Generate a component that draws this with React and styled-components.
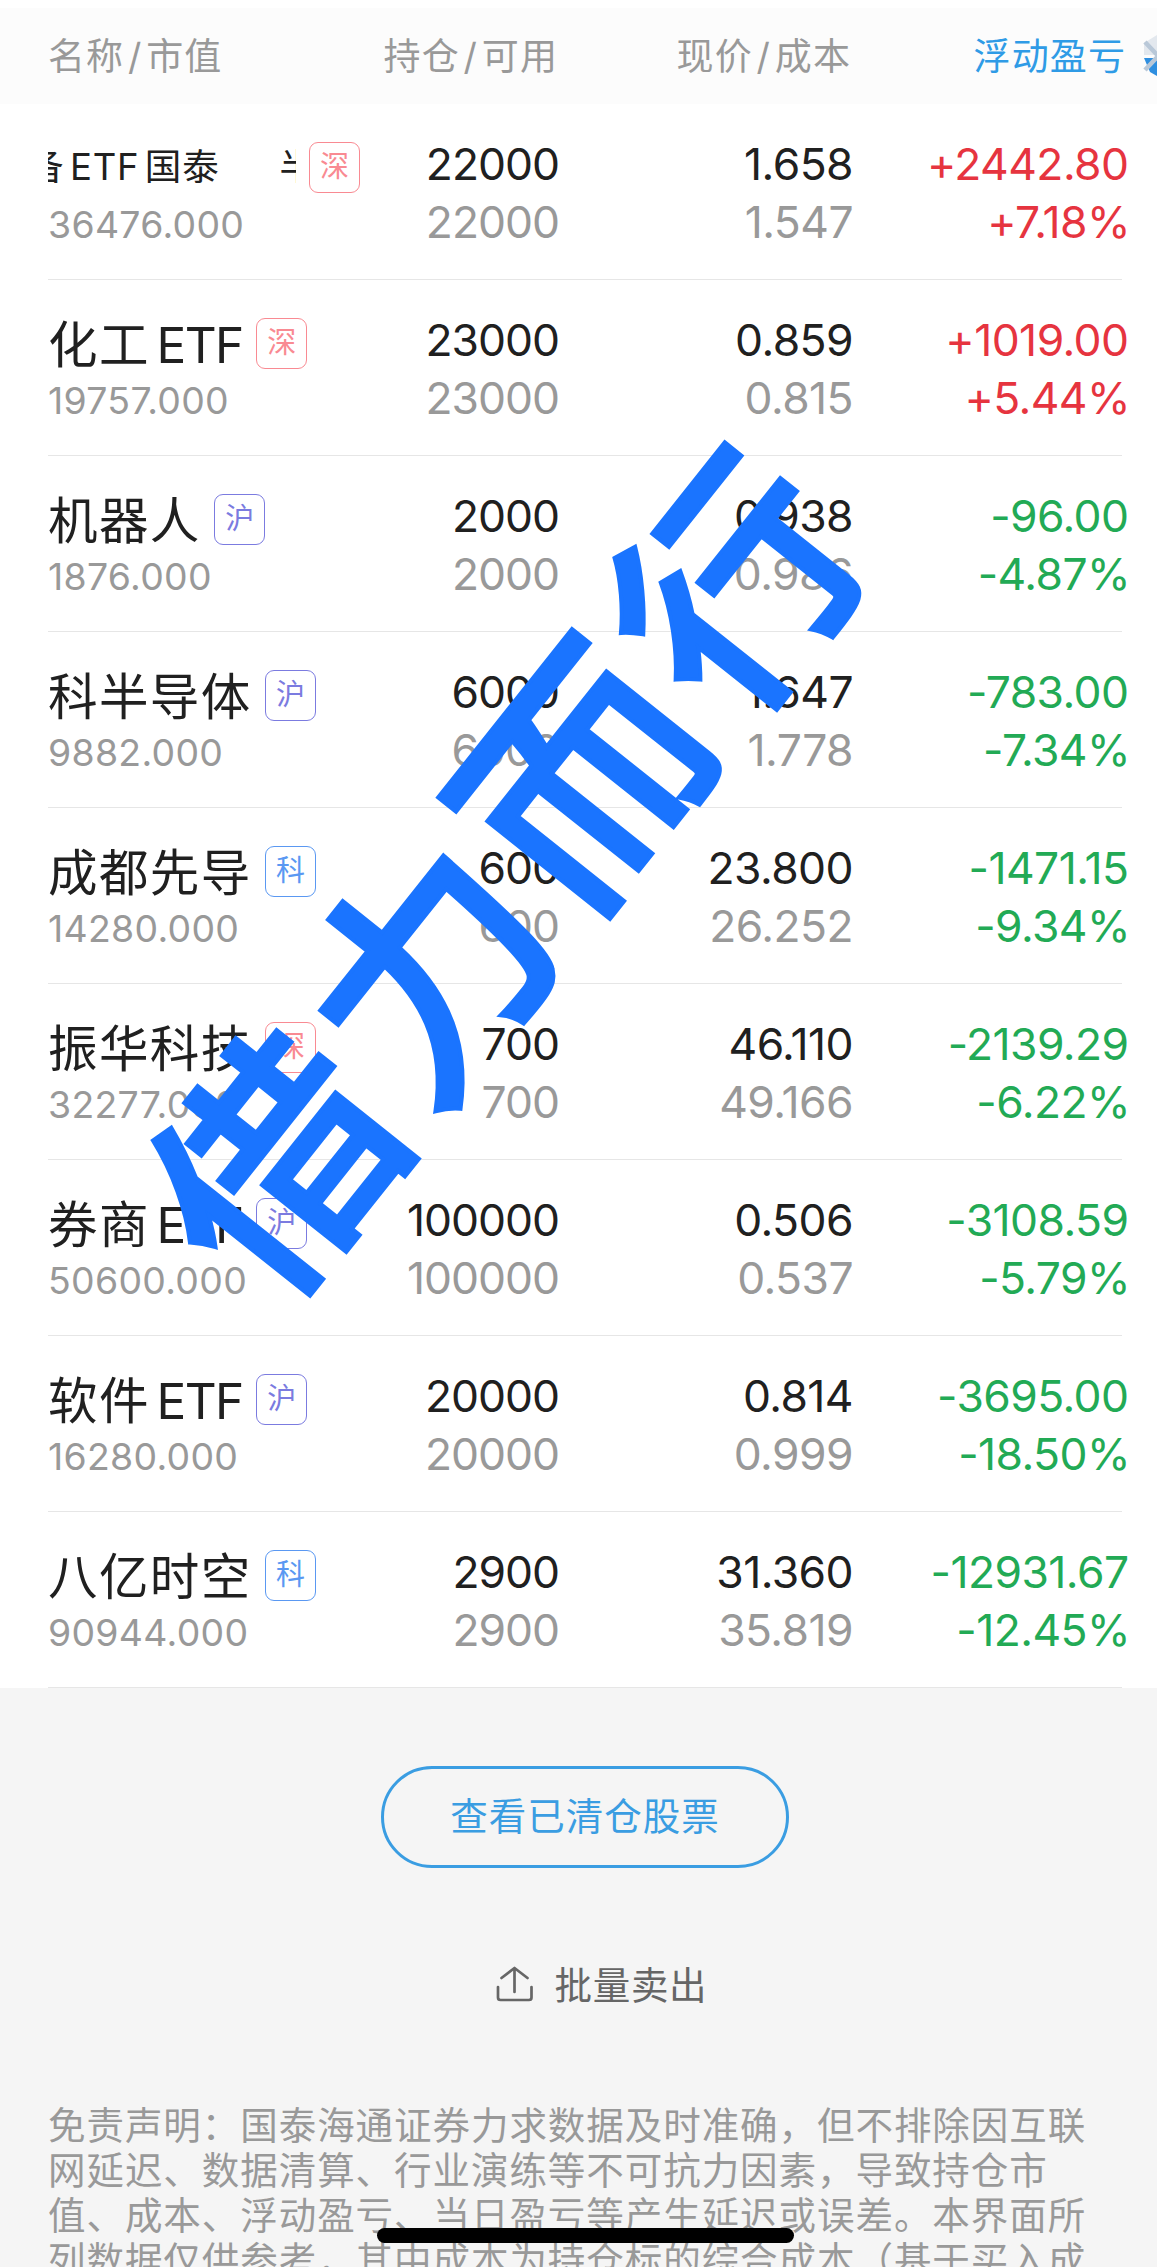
import React from "react";
import styled, { createGlobalStyle } from "styled-components";

const GlobalStyle = createGlobalStyle`
  * { box-sizing: border-box; }
  html, body { margin: 0; padding: 0; }
  body {
    width: 1157px;
    height: 2267px;
    overflow: hidden;
    background: #f5f5f5;
    font-family: Inter, "Noto Sans CJK SC", sans-serif;
    font-weight: 400;
    font-feature-settings: "calt" 0;
  }
`;

const COLORS = { up: "#e6343f", down: "#22aa55", 深: "#f98a92", 沪: "#7b7be0", 科: "#5a98f2" };

const Page = styled.div`
  position: relative;
  width: 1157px;
  height: 2267px;
  overflow: hidden;
`;

const Panel = styled.section`
  background: #fff;
  padding-top: 8px;
`;

const HeaderRow = styled.header`
  display: grid;
  grid-template-columns: 310px 200px 293px 275px 30px;
  align-items: center;
  height: 96px;
  padding: 2px 0 0 48px;
  background: #fcfcfc;
  color: #999;
  font-size: 37px;
  letter-spacing: 1.1px;
  line-height: 54px;
`;

const HeaderCell = styled.div`
  text-align: ${(p) => (p.$left ? "left" : "right")};
  color: ${(p) => (p.$active ? "#2f9be6" : "inherit")};
  white-space: nowrap;
`;

const Slash = styled.span`
  display: inline-block;
  width: 22px;
  text-align: center;
`;

const SettingsIcon = styled.svg`
  display: block;
  margin: -2px 0 0 11px;
`;

const Row = styled.article`
  display: grid;
  grid-template-columns: 312px 199px 294px 275.5px;
  height: 176px;
  padding-left: 48px;
  background: linear-gradient(#e6e6e6, #e6e6e6) 48px 175px / 1074px 1px no-repeat;
`;

const NameCell = styled.div`
  padding-top: 27px;
`;

const NameLine = styled.div`
  display: flex;
  align-items: center;
  height: 72px;
  color: #202020;
  white-space: nowrap;
`;

const Name = styled.span`
  padding-top: 3px;
  font-size: 49.5px;
  letter-spacing: 1.4px;
  line-height: 72px;
`;

const Latin = styled.span`
  display: inline-block;
  width: ${(p) => (p.$inner ? "2.2em" : "1.88em")};
  text-align: ${(p) => (p.$inner ? "center" : "right")};
  letter-spacing: ${(p) => (p.$inner ? "0.02em" : "-0.03em")};
`;

const Marquee = styled.div`
  display: flex;
  gap: 60px;
  width: 248px;
  overflow: hidden;
  font-size: 36.5px;
  letter-spacing: 0.9px;
  line-height: 60px;
`;

const MarqueeText = styled.span`
  flex: none;

  &:first-child {
    margin-left: -170.5px;
  }
`;

const Tag = styled.span`
  display: flex;
  flex: none;
  align-items: center;
  justify-content: center;
  width: 51px;
  height: 51px;
  margin-left: 13.5px;
  border: 1.5px solid ${(p) => COLORS[p.$kind]};
  border-radius: 9px;
  color: ${(p) => COLORS[p.$kind]};
  font-size: 29px;
  line-height: 48px;
`;

const MarketValue = styled.div`
  color: #999;
  font-size: 37.4px;
  line-height: 44px;
  letter-spacing: 0.3px;
`;

const NumberCell = styled.div`
  padding-top: 30.5px;
  color: ${(p) => p.$color || "#202020"};
  font-size: 44.4px;
  line-height: 58px;
  letter-spacing: ${(p) => p.$spacing || "-0.55px"};
  text-align: right;
  white-space: nowrap;
`;

const SubNumber = styled.div`
  margin-right: ${(p) => (p.$inherit ? "-1.5px" : "0")};
  color: ${(p) => (p.$inherit ? "inherit" : "#999")};
`;

const Footer = styled.footer`
  display: flex;
  flex-direction: column;
  padding-top: 78px;
`;

const ClearedButton = styled.button`
  width: 408px;
  height: 102px;
  margin-left: 381px;
  padding: 0;
  border: 3px solid #3a9de2;
  border-radius: 51px;
  background: transparent;
  color: #3a9de2;
  font: inherit;
  font-size: 37.5px;
  letter-spacing: 1px;
  line-height: 92px;
`;

const BatchSell = styled.div`
  display: flex;
  align-items: center;
  gap: 21px;
  height: 60px;
  margin: 84px 0 0 494.5px;
  color: #666;
  font-size: 37.5px;
  letter-spacing: 0.7px;

  svg {
    position: relative;
    top: 2px;
  }
`;

const Disclaimer = styled.p`
  margin: 91px 0 0 48px;
  color: #999;
  font-size: 37.5px;
  letter-spacing: 0.95px;
  line-height: 45px;
  white-space: nowrap;
`;

const Line = styled.span`
  display: block;
`;

const HomeBar = styled.div`
  position: absolute;
  left: 377px;
  top: 2228px;
  width: 417px;
  height: 15px;
  border-radius: 8px;
  background: #000;
`;

const Watermark = styled.div`
  position: absolute;
  left: 499px;
  top: 861px;
  transform: translate(-50%, -50%) rotate(-51.5deg);
  color: #1a74ff;
  font-family: "Noto Sans CJK SC", sans-serif;
  font-size: 238px;
  font-weight: 500;
  letter-spacing: 9px;
  line-height: 1;
  white-space: nowrap;
  -webkit-text-stroke: 4px #1a74ff;
  pointer-events: none;
`;

const HOLDINGS = [
  { name: "半导体设备", latin: "ETF", tail: "国泰", scroll: true, tag: "深", value: "36476.000", qty: "22000", price: "1.658", cost: "1.547", pnl: "+2442.80", pct: "+7.18%" },
  { name: "化工", latin: "ETF", tag: "深", value: "19757.000", qty: "23000", price: "0.859", cost: "0.815", pnl: "+1019.00", pct: "+5.44%" },
  { name: "机器人", tag: "沪", value: "1876.000", qty: "2000", price: "0.938", cost: "0.986", pnl: "-96.00", pct: "-4.87%" },
  { name: "科半导体", tag: "沪", value: "9882.000", qty: "6000", price: "1.647", cost: "1.778", pnl: "-783.00", pct: "-7.34%" },
  { name: "成都先导", tag: "科", value: "14280.000", qty: "600", price: "23.800", cost: "26.252", pnl: "-1471.15", pct: "-9.34%" },
  { name: "振华科技", tag: "深", value: "32277.000", qty: "700", price: "46.110", cost: "49.166", pnl: "-2139.29", pct: "-6.22%" },
  { name: "券商", latin: "ETF", tag: "沪", value: "50600.000", qty: "100000", price: "0.506", cost: "0.537", pnl: "-3108.59", pct: "-5.79%" },
  { name: "软件", latin: "ETF", tag: "沪", value: "16280.000", qty: "20000", price: "0.814", cost: "0.999", pnl: "-3695.00", pct: "-18.50%" },
  { name: "八亿时空", tag: "科", value: "90944.000", qty: "2900", price: "31.360", cost: "35.819", pnl: "-12931.67", pct: "-12.45%" },
];

const DISCLAIMER = [
  "免责声明：国泰海通证券力求数据及时准确，但不排除因互联",
  "网延迟、数据清算、行业演练等不可抗力因素，导致持仓市",
  "值、成本、浮动盈亏、当日盈亏等产生延迟或误差。本界面所",
  "列数据仅供参考，其中成本为持仓标的综合成本（基于买入成",
];

function Label({ item }) {
  return (
    <>
      {item.name}
      {item.latin && <Latin $inner={Boolean(item.tail)}>{item.latin}</Latin>}
      {item.tail}
    </>
  );
}

function Holding({ item }) {
  return (
    <Row>
      <NameCell>
        <NameLine>
          {item.scroll ? (
            <Marquee>
              <MarqueeText><Label item={item} /></MarqueeText>
              <MarqueeText><Label item={item} /></MarqueeText>
            </Marquee>
          ) : (
            <Name><Label item={item} /></Name>
          )}
          <Tag $kind={item.tag}>{item.tag}</Tag>
        </NameLine>
        <MarketValue>{item.value}</MarketValue>
      </NameCell>
      <NumberCell $spacing="-1px">
        {item.qty}
        <SubNumber>{item.qty}</SubNumber>
      </NumberCell>
      <NumberCell>
        {item.price}
        <SubNumber>{item.cost}</SubNumber>
      </NumberCell>
      <NumberCell $color={item.pnl[0] === "+" ? COLORS.up : COLORS.down}>
        {item.pnl}
        <SubNumber $inherit>{item.pct}</SubNumber>
      </NumberCell>
    </Row>
  );
}

export default function App() {
  return (
    <Page>
      <GlobalStyle />
      <Panel>
        <HeaderRow>
          <HeaderCell $left>名称<Slash>/</Slash>市值</HeaderCell>
          <HeaderCell>持仓<Slash>/</Slash>可用</HeaderCell>
          <HeaderCell>现价<Slash>/</Slash>成本</HeaderCell>
          <HeaderCell $active>浮动盈亏</HeaderCell>
          <SettingsIcon width="20" height="42" viewBox="0 0 20 42">
            <path d="M7 8 L20 0 V20 H7Z" fill="#e3e8ee" />
            <path d="M7 23 H20 V41 L13 37Z" fill="#2f8fe0" />
            <path d="M8 7 L26 26 M8 35 L26 16" stroke="#b9c8d8" strokeWidth="4.5" />
          </SettingsIcon>
        </HeaderRow>
        {HOLDINGS.map((item) => (
          <Holding key={item.name} item={item} />
        ))}
      </Panel>
      <Footer>
        <ClearedButton>查看已清仓股票</ClearedButton>
        <BatchSell>
          <svg width="39" height="38" viewBox="0 0 39 38" fill="none" stroke="#666" strokeWidth="2.7" strokeLinecap="round" strokeLinejoin="round">
            <path d="M3 22 V32.5 Q3 35 5.5 35 H34 Q36.5 35 36.5 32.5 V22" />
            <path d="M19.5 27 V3 M6.5 13 L19.5 3 L32.5 13" />
          </svg>
          <span>批量卖出</span>
        </BatchSell>
        <Disclaimer>
          {DISCLAIMER.map((text) => (
            <Line key={text}>{text}</Line>
          ))}
        </Disclaimer>
      </Footer>
      <Watermark>借力而行</Watermark>
      <HomeBar />
    </Page>
  );
}
